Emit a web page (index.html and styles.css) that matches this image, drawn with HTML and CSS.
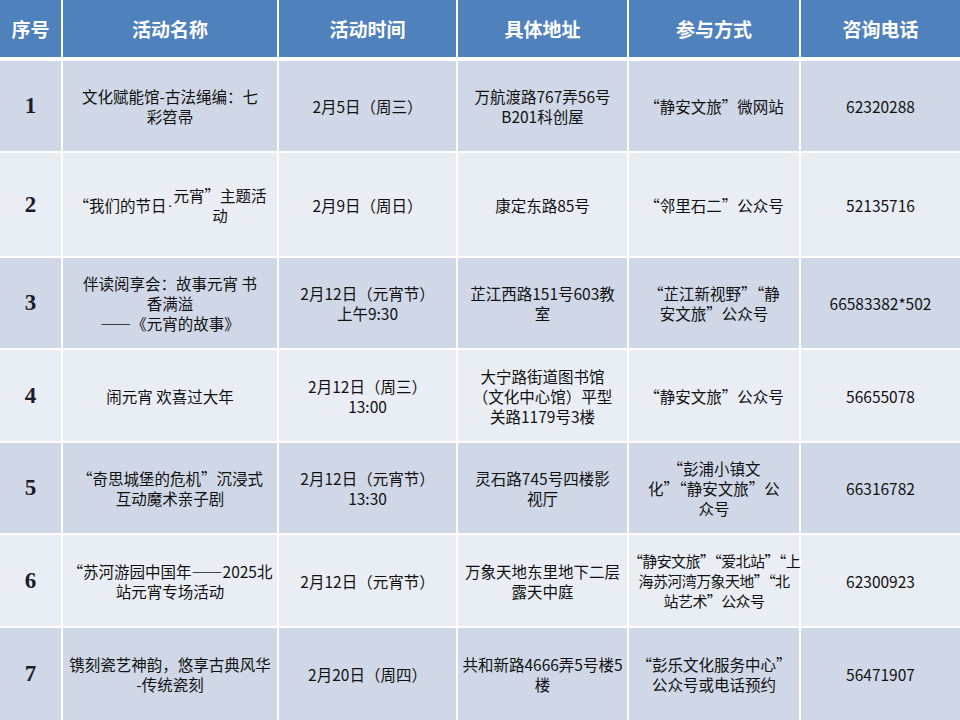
FILE: index.html
```html
<!DOCTYPE html>
<html lang="zh-CN">
<head>
<meta charset="utf-8">
<title>活动表</title>
<link rel="stylesheet" href="styles.css">
</head>
<body>
<div class="sheet">
  <div class="head">
    <div class="hc">序号</div>
    <div class="hc">活动名称</div>
    <div class="hc">活动时间</div>
    <div class="hc">具体地址</div>
    <div class="hc">参与方式</div>
    <div class="hc">咨询电话</div>
  </div>
  <div class="body">
    <div class="c num dark">1</div>
    <div class="c dark">文化赋能馆-古法绳编：七<br>彩笤帚</div>
    <div class="c dark">2月5日（周三）</div>
    <div class="c dark">万航渡路767弄56号<br>B201科创屋</div>
    <div class="c dark">“静安文旅”微网站</div>
    <div class="c dark">62320288</div>

    <div class="c num light">2</div>
    <div class="c light">“我们的节日<span class="dot">·</span>元宵”主题活<br>动</div>
    <div class="c light">2月9日（周日）</div>
    <div class="c light">康定东路85号</div>
    <div class="c light">“邻里石二”公众号</div>
    <div class="c light">52135716</div>

    <div class="c num dark">3</div>
    <div class="c dark">伴读阅享会：故事元宵 书<br>香满溢<br>——《元宵的故事》</div>
    <div class="c dark">2月12日（元宵节）<br>上午9:30</div>
    <div class="c dark">芷江西路151号603教<br>室</div>
    <div class="c dark">“芷江新视野”“静<br>安文旅”公众号</div>
    <div class="c dark">66583382*502</div>

    <div class="c num light">4</div>
    <div class="c light">闹元宵 欢喜过大年</div>
    <div class="c light">2月12日（周三）<br>13:00</div>
    <div class="c light">大宁路街道图书馆<br>（文化中心馆）平型<br>关路1179号3楼</div>
    <div class="c light">“静安文旅”公众号</div>
    <div class="c light">56655078</div>

    <div class="c num dark">5</div>
    <div class="c dark">“奇思城堡的危机”沉浸式<br>互动魔术亲子剧</div>
    <div class="c dark">2月12日（元宵节）<br>13:30</div>
    <div class="c dark">灵石路745号四楼影<br>视厅</div>
    <div class="c dark">“彭浦小镇文<br>化”“静安文旅”公<br>众号</div>
    <div class="c dark">66316782</div>

    <div class="c num light">6</div>
    <div class="c light">“苏河游园中国年——2025北<br>站元宵专场活动</div>
    <div class="c light">2月12日（元宵节）</div>
    <div class="c light">万象天地东里地下二层<br>露天中庭</div>
    <div class="c light tight">“静安文旅”“爱北站”“上<br>海苏河湾万象天地”“北<br>站艺术”公众号</div>
    <div class="c light">62300923</div>

    <div class="c num dark">7</div>
    <div class="c dark">镌刻瓷艺神韵，悠享古典风华<br>-传统瓷刻</div>
    <div class="c dark">2月20日（周四）</div>
    <div class="c dark">共和新路4666弄5号楼5<br>楼</div>
    <div class="c dark">“彭乐文化服务中心”<br>公众号或电话预约</div>
    <div class="c dark">56471907</div>
  </div>
</div>
</body>
</html>
```

FILE: styles.css
```css
html, body {
  margin: 0;
  padding: 0;
  background: #ffffff;
}
body {
  width: 960px;
  height: 720px;
  overflow: hidden;
  font-family: "Noto Sans CJK SC", "Noto Sans", sans-serif;
}
.sheet {
  display: flex;
  flex-direction: column;
  gap: 4px;
  background: #ffffff;
}
.head, .body {
  display: grid;
  grid-template-columns: 61px 214px 177px 169px 170px 159px;
  column-gap: 2px;
}
.body {
  grid-template-rows: 90px 103px 90px 91px 90px 91px 92px;
  row-gap: 2px;
}
.head {
  height: 57px;
}
.hc {
  background: #4f81bd;
  color: #ffffff;
  font-weight: 700;
  font-size: 19px;
  display: flex;
  align-items: center;
  justify-content: center;
}
.c {
  display: flex;
  align-items: center;
  justify-content: center;
  text-align: center;
  font-size: 15.5px;
  line-height: 20px;
  color: #111111;
  white-space: nowrap;
}
.tight {
  font-size: 15px;
  letter-spacing: -0.6px;
}
.dot {
  font-family: "Liberation Sans", sans-serif;
  padding: 0 1px;
}
.dark {
  background: #d0d8e8;
}
.light {
  background: #e9edf4;
}
.num {
  font-family: "Liberation Serif", "DejaVu Serif", serif;
  font-weight: 700;
  font-size: 23px;
  color: #1c1c28;
}
```
